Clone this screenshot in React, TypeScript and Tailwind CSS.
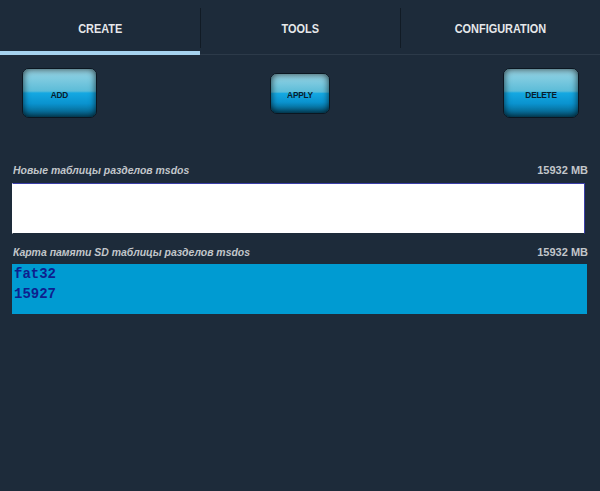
import type { ReactNode } from 'react';

const tabs = ['CREATE', 'TOOLS', 'CONFIGURATION'];

function GlossButton({ label, className }: { label: string; className: string }) {
  return (
    <button
      type="button"
      className={`relative overflow-hidden rounded-[7px] border border-[#0b1620] bg-[linear-gradient(to_bottom,#9ad6e6_0%,#5cbcd8_46%,#14a8e2_50%,#0a93cf_72%,#055577_100%)] shadow-[inset_0_0_7px_rgba(0,0,0,0.75)] ${className}`}
    >
      <span className="relative inline-block text-[9px] font-bold tracking-tight text-[#0a1e2c] [transform:scaleX(0.92)]">
        {label}
      </span>
    </button>
  );
}

function Section({ title, size, children }: { title: string; size: string; children: ReactNode }) {
  return (
    <div className="flex flex-col">
      <div className="flex items-end justify-between pl-[13px] pr-[12px] pb-[4px]">
        <span className="inline-block origin-left text-[11px] font-bold italic text-[#c2c6ca] [transform:scaleX(0.95)]">
          {title}
        </span>
        <span className="text-[11px] font-bold text-[#c2c6ca]">{size}</span>
      </div>
      {children}
    </div>
  );
}

export default function App() {
  return (
    <div className="h-[491px] w-[600px] bg-[#1d2b3a] [font-family:'Liberation_Sans',Arial,sans-serif]">
      {/* tab bar */}
      <div className="flex h-[55px] border-b border-[#2c3a49]">
        {tabs.map((t, i) => (
          <div key={t} className="relative flex flex-1 items-center justify-center">
            {i > 0 && <div className="absolute left-0 top-[8px] h-[40px] w-px bg-[#111b25]" />}
            <span className="inline-block pt-[4px] text-[13px] font-bold text-[#e6e8ea] [transform:scaleX(0.84)]">
              {t}
            </span>
            {i === 0 && <div className="absolute bottom-[-1px] left-0 right-0 h-[4px] bg-[#a5d2ef]" />}
          </div>
        ))}
      </div>

      {/* action buttons */}
      <div className="flex items-center justify-between pl-[22px] pr-[21px] pt-[13px]">
        <GlossButton label="ADD" className="h-[50px] w-[75px]" />
        <GlossButton label="APPLY" className="h-[41px] w-[60px]" />
        <GlossButton label="DELETE" className="h-[50px] w-[76px]" />
      </div>

      <div className="mt-[44px] flex flex-col gap-[10px]">
        <Section title="Новые таблицы разделов msdos" size="15932 MB">
          <div className="ml-[12px] mr-[15px] h-[51px] border border-[#3b3fa8] border-b-[#1d2b3a] border-l-white bg-white" />
        </Section>
        <Section title="Карта памяти SD таблицы разделов msdos" size="15932 MB">
          <div className="ml-[12px] mr-[13px] flex h-[50px] flex-col bg-[#009bd2] pl-[2px] text-[14px] font-bold leading-[20px] text-[#0e1f8e] [font-family:'Liberation_Mono','Courier_New',monospace]">
            <span>fat32</span>
            <span>15927</span>
          </div>
        </Section>
      </div>
    </div>
  );
}
